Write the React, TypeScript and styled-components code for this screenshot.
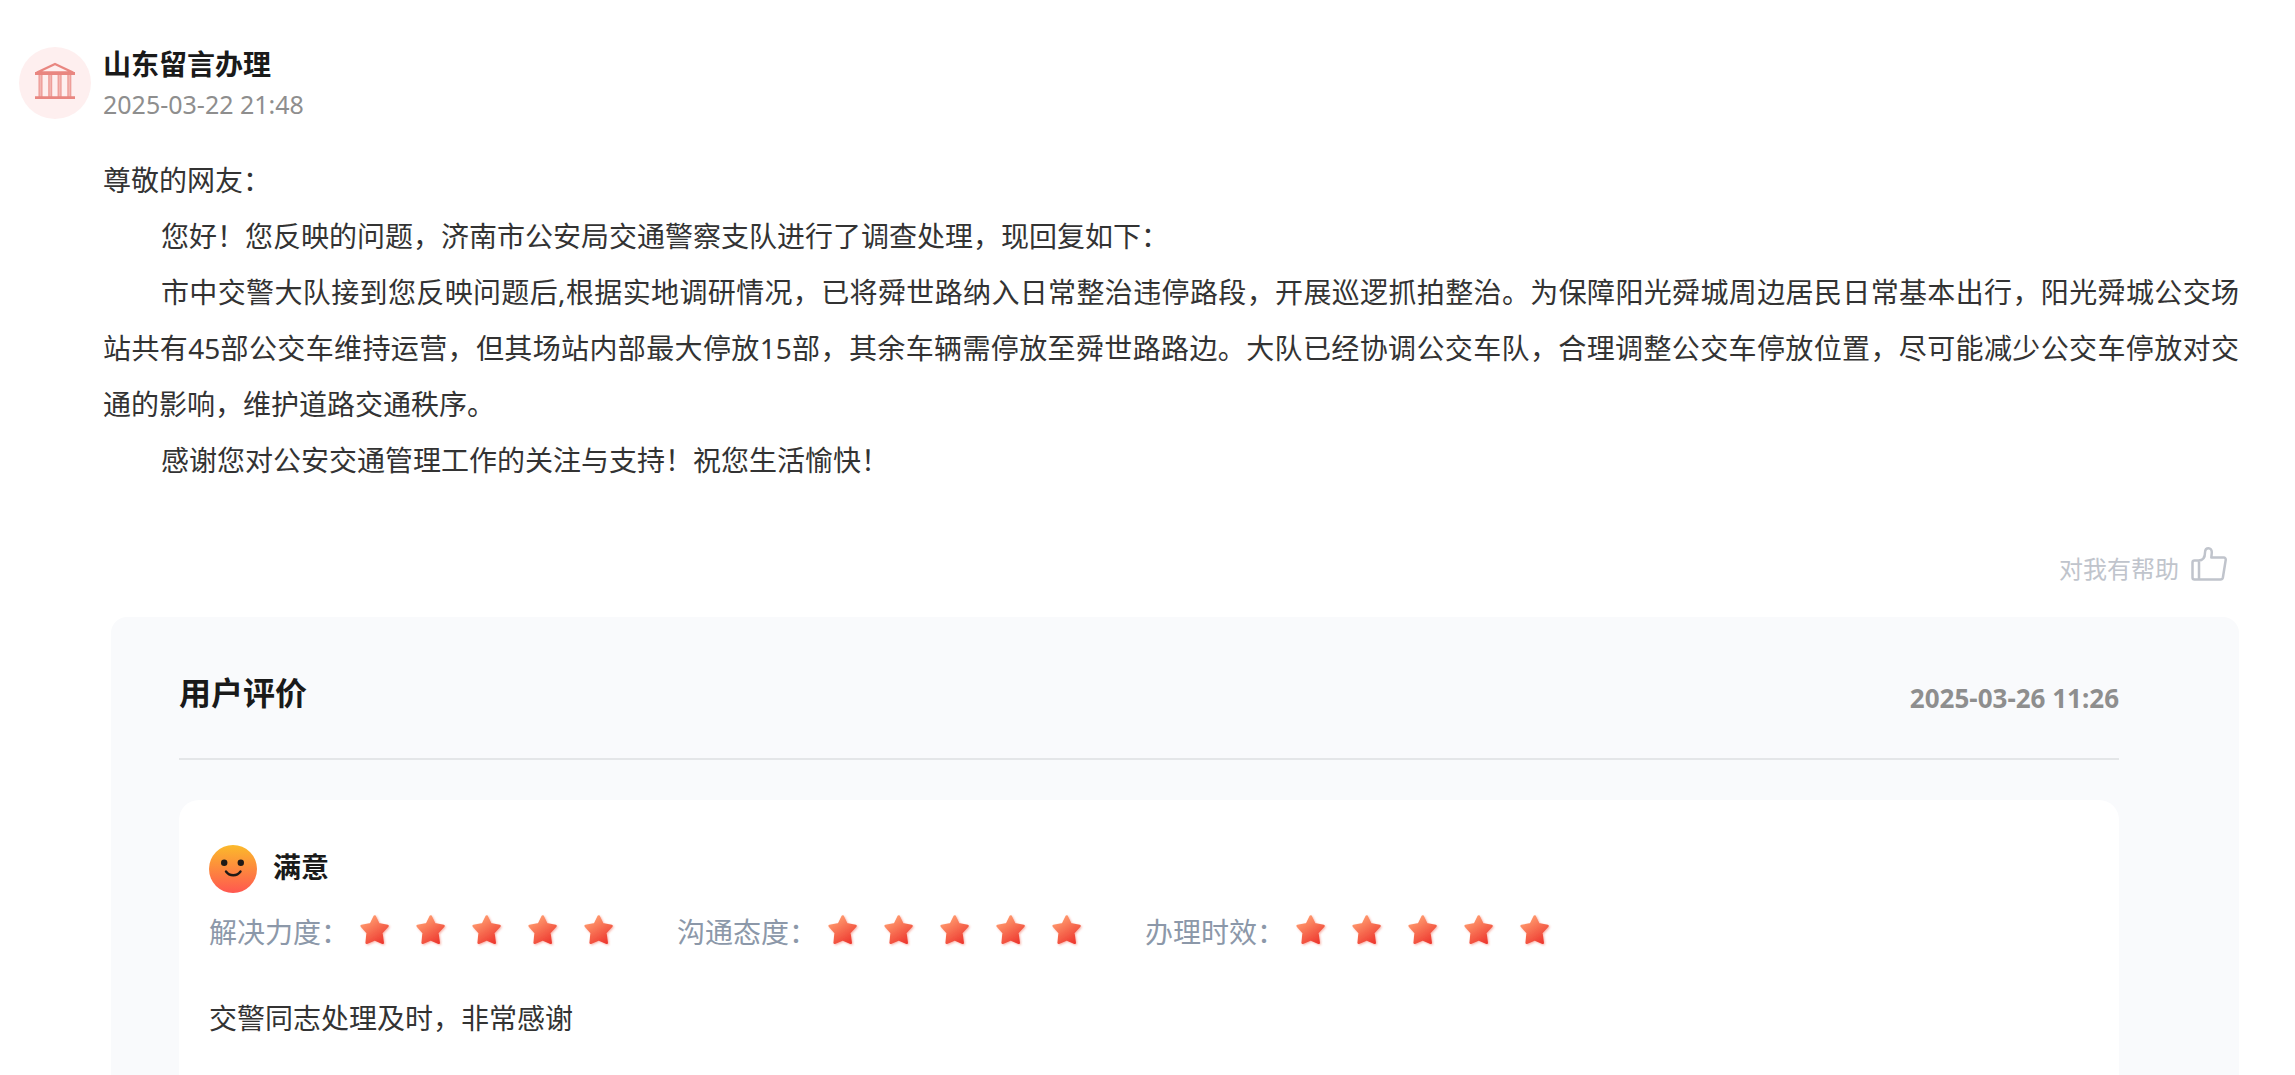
import React from "react";
import styled, { createGlobalStyle } from "styled-components";

const GlobalStyle = createGlobalStyle`
  * { box-sizing: border-box; }
  body {
    margin: 0;
    background: #fff;
    color: #333;
    font-family: "Noto Sans", "Noto Sans CJK SC", sans-serif;
  }
`;

const Page = styled.main`
  min-height: 100vh;
  display: flex;
  flex-direction: column;
  padding: 44px 56px 0 19px;
`;

const Header = styled.header`
  display: flex;
  align-items: flex-start;
  gap: 12px;
`;

const Avatar = styled.div`
  width: 72px;
  height: 72px;
  margin-top: 3px;
  padding-bottom: 4px;
  border-radius: 50%;
  background: #feefef;
  display: flex;
  align-items: center;
  justify-content: center;
`;

const Author = styled.h1`
  margin: 0;
  font-size: 28px;
  line-height: 40px;
  font-weight: 700;
  color: #1a1a1a;
`;

const PostTime = styled.time`
  display: block;
  font-size: 25px;
  line-height: 40px;
  color: #8e8e8e;
`;

const Content = styled.article`
  margin: 28px 0 0 84px;
  font-size: 28px;
  line-height: 56px;
  text-align: justify;
`;

const Paragraph = styled.p<{ $indent?: boolean }>`
  margin: 0;
  text-indent: ${(p) => (p.$indent ? "58px" : "0")};
`;

const Actions = styled.div`
  display: flex;
  justify-content: flex-end;
  margin-top: 53px;
  padding-right: 12px;
`;

const HelpfulButton = styled.button`
  display: flex;
  align-items: center;
  gap: 12px;
  padding: 0;
  border: 0;
  background: none;
  font: inherit;
  font-size: 24px;
  line-height: 56px;
  color: #c0c4cc;
  cursor: pointer;

  svg { margin-bottom: 10px; }
`;

const Review = styled.section`
  flex: 1;
  display: flex;
  flex-direction: column;
  margin: 20px 0 0 92px;
  padding: 48px 120px 0 68px;
  border-radius: 16px 16px 0 0;
  background: #f9fafc;
`;

const ReviewHeader = styled.div`
  display: flex;
  align-items: center;
  justify-content: space-between;
  padding-bottom: 37px;
  border-bottom: 2px solid #e4e6e8;
`;

const ReviewTitle = styled.h2`
  margin: 0;
  font-size: 32px;
  line-height: 56px;
  font-weight: 700;
  color: #1a1a1a;
`;

const ReviewTime = styled.time`
  padding-top: 10px;
  font-size: 26px;
  line-height: 44px;
  font-weight: 700;
  color: #8e8e8e;
`;

const ReviewCard = styled.div`
  flex: 1;
  margin-top: 40px;
  padding: 45px 30px 28px;
  border-radius: 20px 20px 0 0;
  background: #fff;
`;

const Verdict = styled.div`
  display: flex;
  align-items: center;
  gap: 16px;
  height: 48px;
  font-size: 28px;
  line-height: 44px;
  font-weight: 700;
  color: #1a1a1a;
`;

const VerdictText = styled.span`
  padding-bottom: 4px;
`;

const Ratings = styled.div`
  display: flex;
  flex-wrap: wrap;
  gap: 0 48px;
  margin-top: 11px;
`;

const Rating = styled.div`
  display: flex;
  align-items: center;
  font-size: 28px;
  line-height: 56px;
  color: #8c98a9;
`;

const Stars = styled.div`
  display: flex;
`;

const StarCell = styled.span`
  display: flex;
  width: 56px;
  padding: 0 0 4px 9px;
`;

const Comment = styled.p`
  margin: 30px 0 0;
  font-size: 28px;
  line-height: 56px;
`;

const BankIcon = () => (
  <svg width="42" height="38" viewBox="0 0 42 38" fill="none" stroke="#e98680" aria-hidden="true">
    <path d="M3 10.500 21 2l18 8.500Z" strokeWidth="2.400" strokeLinejoin="round" />
    <path d="M1 11.500h40M1 35.700h40" strokeWidth="2.800" />
    <path d="M6.500 12v23M16.200 12v23M25.600 12v23M35.300 12v23" strokeWidth="4" strokeOpacity="0.550" />
    <path d="M5.200 12v23M7.800 12v23M14.900 12v23M17.500 12v23M24.300 12v23M26.900 12v23M34 12v23M36.600 12v23" strokeWidth="1.200" strokeOpacity="0.500" />
  </svg>
);

const ThumbIcon = () => (
  <svg width="36" height="36" viewBox="0 0 36 36" fill="none" stroke="#c0c4cc" strokeWidth="2.500" strokeLinejoin="round" aria-hidden="true">
    <path d="M7.500 14.500H3.500A2 2 0 0 0 1.500 16.500V31.500a2 2 0 0 0 2 2H29.500a2.500 2.500 0 0 0 2.400-2L34.700 14a2 2 0 0 0-2-2.400H20.300L20.800 6.500C21 .800 14.200.800 14 6.500 14 11.500 12 14.500 7.500 14.500ZM8 14.500v19" />
  </svg>
);

const SmileIcon = () => (
  <svg width="48" height="48" viewBox="0 0 48 48" aria-hidden="true">
    <defs>
      <linearGradient id="smile" x1="0" y1="0" x2="0" y2="1">
        <stop offset="0" stopColor="#fbba2b" />
        <stop offset="1" stopColor="#ff5750" />
      </linearGradient>
    </defs>
    <circle cx="24" cy="24" r="24" fill="url(#smile)" />
    <circle cx="15.200" cy="17.800" r="3.200" fill="#1f1a17" />
    <circle cx="31.800" cy="17.800" r="3.200" fill="#1f1a17" />
    <path d="M17 26.500c3.500 5 11 5 14.500 0" fill="none" stroke="#1f1a17" strokeWidth="2.400" strokeLinecap="round" />
  </svg>
);

const StarIcon = () => (
  <svg width="34" height="34" viewBox="0 0 34 34" aria-hidden="true">
    <defs>
      <linearGradient id="star" x1="0.200" y1="0.100" x2="0.750" y2="1">
        <stop offset="0" stopColor="#ff9a6e" />
        <stop offset="1" stopColor="#ee3a30" />
      </linearGradient>
      <filter id="glow" x="-20%" y="-20%" width="150%" height="150%">
        <feDropShadow dx="1" dy="1" stdDeviation="1" floodColor="#f0513c" floodOpacity="0.450" />
      </filter>
    </defs>
    <path
      d="M16.700 3.400 20.600 11.300 29.600 12.900 23.400 19.600 24.800 29.800 16.700 26.300 8.600 29.800 9.600 19.600 3.600 12.900 12.800 11.300Z"
      fill="url(#star)"
      stroke="url(#star)"
      strokeWidth="2.400"
      strokeLinejoin="round"
      filter="url(#glow)"
    />
  </svg>
);

const ratings = [
  { label: "解决力度：", score: 5 },
  { label: "沟通态度：", score: 5 },
  { label: "办理时效：", score: 5 },
];

export default function App() {
  return (
    <>
      <GlobalStyle />
      <Page lang="zh-CN">
        <Header>
          <Avatar>
            <BankIcon />
          </Avatar>
          <div>
            <Author>山东留言办理</Author>
            <PostTime dateTime="2025-03-22T21:48">2025-03-22 21:48</PostTime>
          </div>
        </Header>
        <Content>
          <Paragraph>尊敬的网友：</Paragraph>
          <Paragraph $indent>您好！您反映的问题，济南市公安局交通警察支队进行了调查处理，现回复如下：</Paragraph>
          <Paragraph $indent>
            市中交警大队接到您反映问题后,根据实地调研情况，已将舜世路纳入日常整治违停路段，开展巡逻抓拍整治。为保障阳光舜城周边居民日常基本出行，阳光舜城公交场站共有45部公交车维持运营，但其场站内部最大停放15部，其余车辆需停放至舜世路路边。大队已经协调公交车队，合理调整公交车停放位置，尽可能减少公交车停放对交通的影响，维护道路交通秩序。
          </Paragraph>
          <Paragraph $indent>感谢您对公安交通管理工作的关注与支持！祝您生活愉快！</Paragraph>
        </Content>
        <Actions>
          <HelpfulButton type="button">
            对我有帮助
            <ThumbIcon />
          </HelpfulButton>
        </Actions>
        <Review>
          <ReviewHeader>
            <ReviewTitle>用户评价</ReviewTitle>
            <ReviewTime dateTime="2025-03-26T11:26">2025-03-26 11:26</ReviewTime>
          </ReviewHeader>
          <ReviewCard>
            <Verdict>
              <SmileIcon />
              <VerdictText>满意</VerdictText>
            </Verdict>
            <Ratings>
              {ratings.map((r) => (
                <Rating key={r.label}>
                  {r.label}
                  <Stars>
                    {Array.from({ length: r.score }, (_, i) => (
                      <StarCell key={i}>
                        <StarIcon />
                      </StarCell>
                    ))}
                  </Stars>
                </Rating>
              ))}
            </Ratings>
            <Comment>交警同志处理及时，非常感谢</Comment>
          </ReviewCard>
        </Review>
      </Page>
    </>
  );
}
